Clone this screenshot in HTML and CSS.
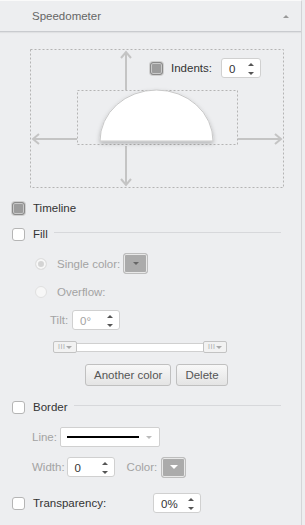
FILE: index.html
```html
<!DOCTYPE html>
<html lang="en">
<head>
  <meta charset="UTF-8" />
  <title>Speedometer</title>
  <link rel="stylesheet" href="styles.css">
</head>
<body>

  <div class="panel">
    <div class="panel-header">
      <span class="panel-title">Speedometer</span>
      <span class="collapse-arrow"></span>
    </div>

    <!-- Indents diagram -->
    <div class="indent-diagram">
      <svg width="254" height="139" viewBox="0 0 254 139">
        <defs>
          <filter id="shade" x="-20%" y="-20%" width="140%" height="150%">
            <feDropShadow dx="0" dy="2" stdDeviation="2" flood-color="#000" flood-opacity="0.25"/>
          </filter>
        </defs>
        <rect x="0.5" y="0.5" width="253" height="138" fill="none" stroke="#b4b4b4" stroke-dasharray="2,2"/>
        <rect x="47.5" y="41.5" width="160" height="54" fill="none" stroke="#b4b4b4" stroke-dasharray="2,2"/>
        <g stroke="#c4c4c4" stroke-width="2" fill="none">
          <line x1="96" y1="3" x2="96" y2="41"/>
          <polyline points="91,9 96,3 101,9"/>
          <line x1="96" y1="97" x2="96" y2="136"/>
          <polyline points="91,130 96,136 101,130"/>
          <line x1="3" y1="90" x2="47" y2="90"/>
          <polyline points="9,85 3,90 9,95"/>
          <line x1="208" y1="90" x2="251" y2="90"/>
          <polyline points="245,85 251,90 245,95"/>
        </g>
        <path d="M70 92 A56.5 51 0 0 1 183 92 Z" fill="#fff" stroke="#c8c8c8" filter="url(#shade)"/>
      </svg>
      <div class="indents-control">
        <span class="checkbox checked"></span>
        <span class="label">Indents:</span>
        <div class="spinner spinner-narrow"><span class="spin-value">0</span><span class="spin-arrows"></span></div>
      </div>
    </div>

    <div class="options">
      <div class="row row-timeline">
        <span class="checkbox checked"></span>
        <span class="label">Timeline</span>
      </div>

      <div class="row section-title row-fill">
        <span class="checkbox"></span>
        <span class="label">Fill</span>
      </div>

      <div class="row sub-row row-single">
        <span class="radio dot"></span>
        <span class="label disabled">Single color:</span>
        <span class="color-btn dark-arrow"></span>
      </div>

      <div class="row sub-row row-overflow">
        <span class="radio"></span>
        <span class="label disabled">Overflow:</span>
      </div>

      <div class="row row-tilt">
        <span class="label disabled">Tilt:</span>
        <div class="spinner"><span class="spin-value disabled">0°</span><span class="spin-arrows"></span></div>
      </div>

      <div class="gradient-slider">
        <span class="slider-handle">III</span>
        <span class="slider-track"></span>
        <span class="slider-handle">III</span>
      </div>

      <div class="button-row">
        <button type="button">Another color</button>
        <button type="button">Delete</button>
      </div>

      <div class="row section-title row-border">
        <span class="checkbox"></span>
        <span class="label">Border</span>
      </div>

      <div class="row row-line">
        <span class="label disabled">Line:</span>
        <div class="line-select"><span class="line-sample"></span><span class="select-arrow"></span></div>
      </div>

      <div class="row row-width">
        <span class="label disabled">Width:</span>
        <div class="spinner"><span class="spin-value">0</span><span class="spin-arrows"></span></div>
        <span class="label disabled color-label">Color:</span>
        <span class="color-btn"></span>
      </div>

      <div class="row row-transparency">
        <span class="checkbox"></span>
        <span class="label transparency-label">Transparency:</span>
        <div class="spinner"><span class="spin-value">0%</span><span class="spin-arrows"></span></div>
      </div>
    </div>
  </div>

</body>
</html>
```

FILE: styles.css
```css
body {
  font-family: "Liberation Sans", Arial, sans-serif;
  font-size: 11.5px;
  background-color: #edeef0;
  color: #333;
  margin: 0;
  padding: 0;
}

.panel {
  width: 302px;
  height: 525px;
  border-right: 1px solid #d4d5d8;
  box-sizing: border-box;
  border-top: 1px solid #fafafa;
}

/* Header */
.panel-header {
  height: 30px;
  display: flex;
  align-items: center;
  justify-content: space-between;
  padding: 0 12px 0 32px;
  border-bottom: 1px solid #c9cbcf;
  box-shadow: 0 1px 1px rgba(0, 0, 0, 0.05);
}

.panel-title {
  color: #666;
}

.collapse-arrow {
  width: 0;
  height: 0;
  border-left: 3px solid transparent;
  border-right: 3px solid transparent;
  border-bottom: 3px solid #999;
}

/* Diagram */
.indent-diagram {
  position: relative;
  width: 254px;
  height: 139px;
  margin: 17px 0 0 30px;
}

.indent-diagram svg {
  display: block;
}

.indents-control {
  position: absolute;
  left: 120px;
  top: 9px;
  display: flex;
  align-items: center;
}

.indents-control .label {
  margin: 0 9px 0 8px;
}

/* Controls */
.checkbox {
  width: 11px;
  height: 11px;
  border: 1px solid #b5b5b5;
  border-radius: 3px;
  background-color: #fff;
  flex-shrink: 0;
}

.checkbox.checked {
  background-color: #9c9c9c;
  border-color: #8a8a8a;
  box-shadow: inset 0 0 0 1px #c9c9c9, 0 0 0 1px #d0d0d0;
}

.radio {
  width: 10px;
  height: 10px;
  border: 1px solid #e0e0e0;
  border-radius: 50%;
  background-color: #f7f7f7;
  flex-shrink: 0;
}

.radio.dot {
  background-color: #d4d4d4;
  box-shadow: inset 0 0 0 2px #f7f7f7;
}

.label {
  white-space: nowrap;
}

.disabled {
  color: #a3a3a3;
}

.spinner {
  width: 48px;
  height: 20px;
  background-color: #fff;
  border: 1px solid #d0d0d0;
  border-radius: 3px;
  display: flex;
  align-items: center;
  justify-content: space-between;
  padding: 1px 6px 0 7px;
  box-sizing: border-box;
}

.spinner-narrow {
  width: 40px;
}

.spin-arrows {
  position: relative;
  width: 6px;
  height: 12px;
}

.spin-arrows::before, .spin-arrows::after {
  content: "";
  position: absolute;
  left: 0;
  border-left: 3px solid transparent;
  border-right: 3px solid transparent;
}

.spin-arrows::before {
  top: 0;
  border-bottom: 3px solid #555;
}

.spin-arrows::after {
  bottom: 0;
  border-top: 3px solid #555;
}

.color-btn {
  width: 23px;
  height: 19px;
  border: 1px solid #bdbdbd;
  border-radius: 3px;
  background-color: #ababab;
  box-shadow: inset 0 0 0 1px #e8e8e8;
  display: flex;
  align-items: center;
  justify-content: center;
}

.color-btn::after {
  content: "";
  border-left: 4px solid transparent;
  border-right: 4px solid transparent;
  border-top: 4px solid #fff;
}

.color-btn.dark-arrow::after {
  border-left-width: 3px;
  border-right-width: 3px;
  border-top: 3px solid #666;
}

/* Rows */
.options {
  padding-left: 12px;
}

.row {
  display: flex;
  align-items: center;
  height: 20px;
}

.row .checkbox + .label {
  margin-left: 8px;
}

.row-timeline {
  margin-top: 10px;
}

.row-fill {
  margin-top: 6px;
}

.section-title::after {
  content: "";
  flex: 1;
  border-top: 1px solid #d7d8db;
  margin: -3px 20px 0 6px;
}

.sub-row {
  padding-left: 23px;
}

.sub-row .radio + .label {
  margin: 0 3px 0 10px;
}

.row-single {
  margin-top: 9px;
  height: 21px;
}

.row-overflow {
  margin-top: 8px;
}

.row-tilt {
  margin-top: 8px;
  padding-left: 38px;
}

.row-tilt .label {
  margin-right: 4px;
}

/* Gradient slider */
.gradient-slider {
  display: flex;
  align-items: center;
  margin: 11px 0 0 41px;
  height: 12px;
}

.slider-handle {
  border: 1px solid #c3c3c3;
  border-radius: 2px;
  background-color: #f2f2f2;
  color: #aaa;
  font-size: 7px;
  line-height: 10px;
  padding-left: 4px;
  box-sizing: border-box;
  width: 24px;
  height: 12px;
  position: relative;
  letter-spacing: 0.5px;
}

.slider-handle::after {
  content: "";
  position: absolute;
  right: 4px;
  top: 4px;
  border-left: 3px solid transparent;
  border-right: 3px solid transparent;
  border-top: 3px solid #aaa;
}

.slider-track {
  width: 126px;
  height: 7px;
  background-color: #fff;
  border: 1px solid #d0d0d0;
  border-left: none;
  border-right: none;
}

/* Buttons */
.button-row {
  display: flex;
  gap: 5px;
  margin: 11px 0 0 73px;
}

button {
  font-family: "Liberation Sans", Arial, sans-serif;
  font-size: 11.5px;
  color: #555;
  height: 22px;
  padding: 0 8px;
  background: linear-gradient(#f8f8f8, #e4e4e4);
  border: 1px solid #c0c0c0;
  border-radius: 3px;
}

.row-border {
  margin-top: 11px;
}

.row-line {
  margin-top: 10px;
  padding-left: 20px;
}

.row-line .label {
  margin-right: 3px;
}

.line-select {
  width: 100px;
  height: 20px;
  background-color: #fff;
  border: 1px solid #d0d0d0;
  border-radius: 2px;
  box-sizing: border-box;
  display: flex;
  align-items: center;
  padding: 0 7px 0 6px;
  justify-content: space-between;
}

.line-sample {
  width: 72px;
  border-top: 2px solid #000;
}

.select-arrow {
  border-left: 3px solid transparent;
  border-right: 3px solid transparent;
  border-top: 3px solid #bbb;
}

.row-width {
  margin-top: 10px;
  padding-left: 20px;
}

.row-width .label {
  margin-right: 2px;
}

.row-width .color-label {
  margin: 0 4px 0 12px;
}

.row-transparency {
  margin-top: 16px;
}

.transparency-label {
  width: 120px;
}
```
